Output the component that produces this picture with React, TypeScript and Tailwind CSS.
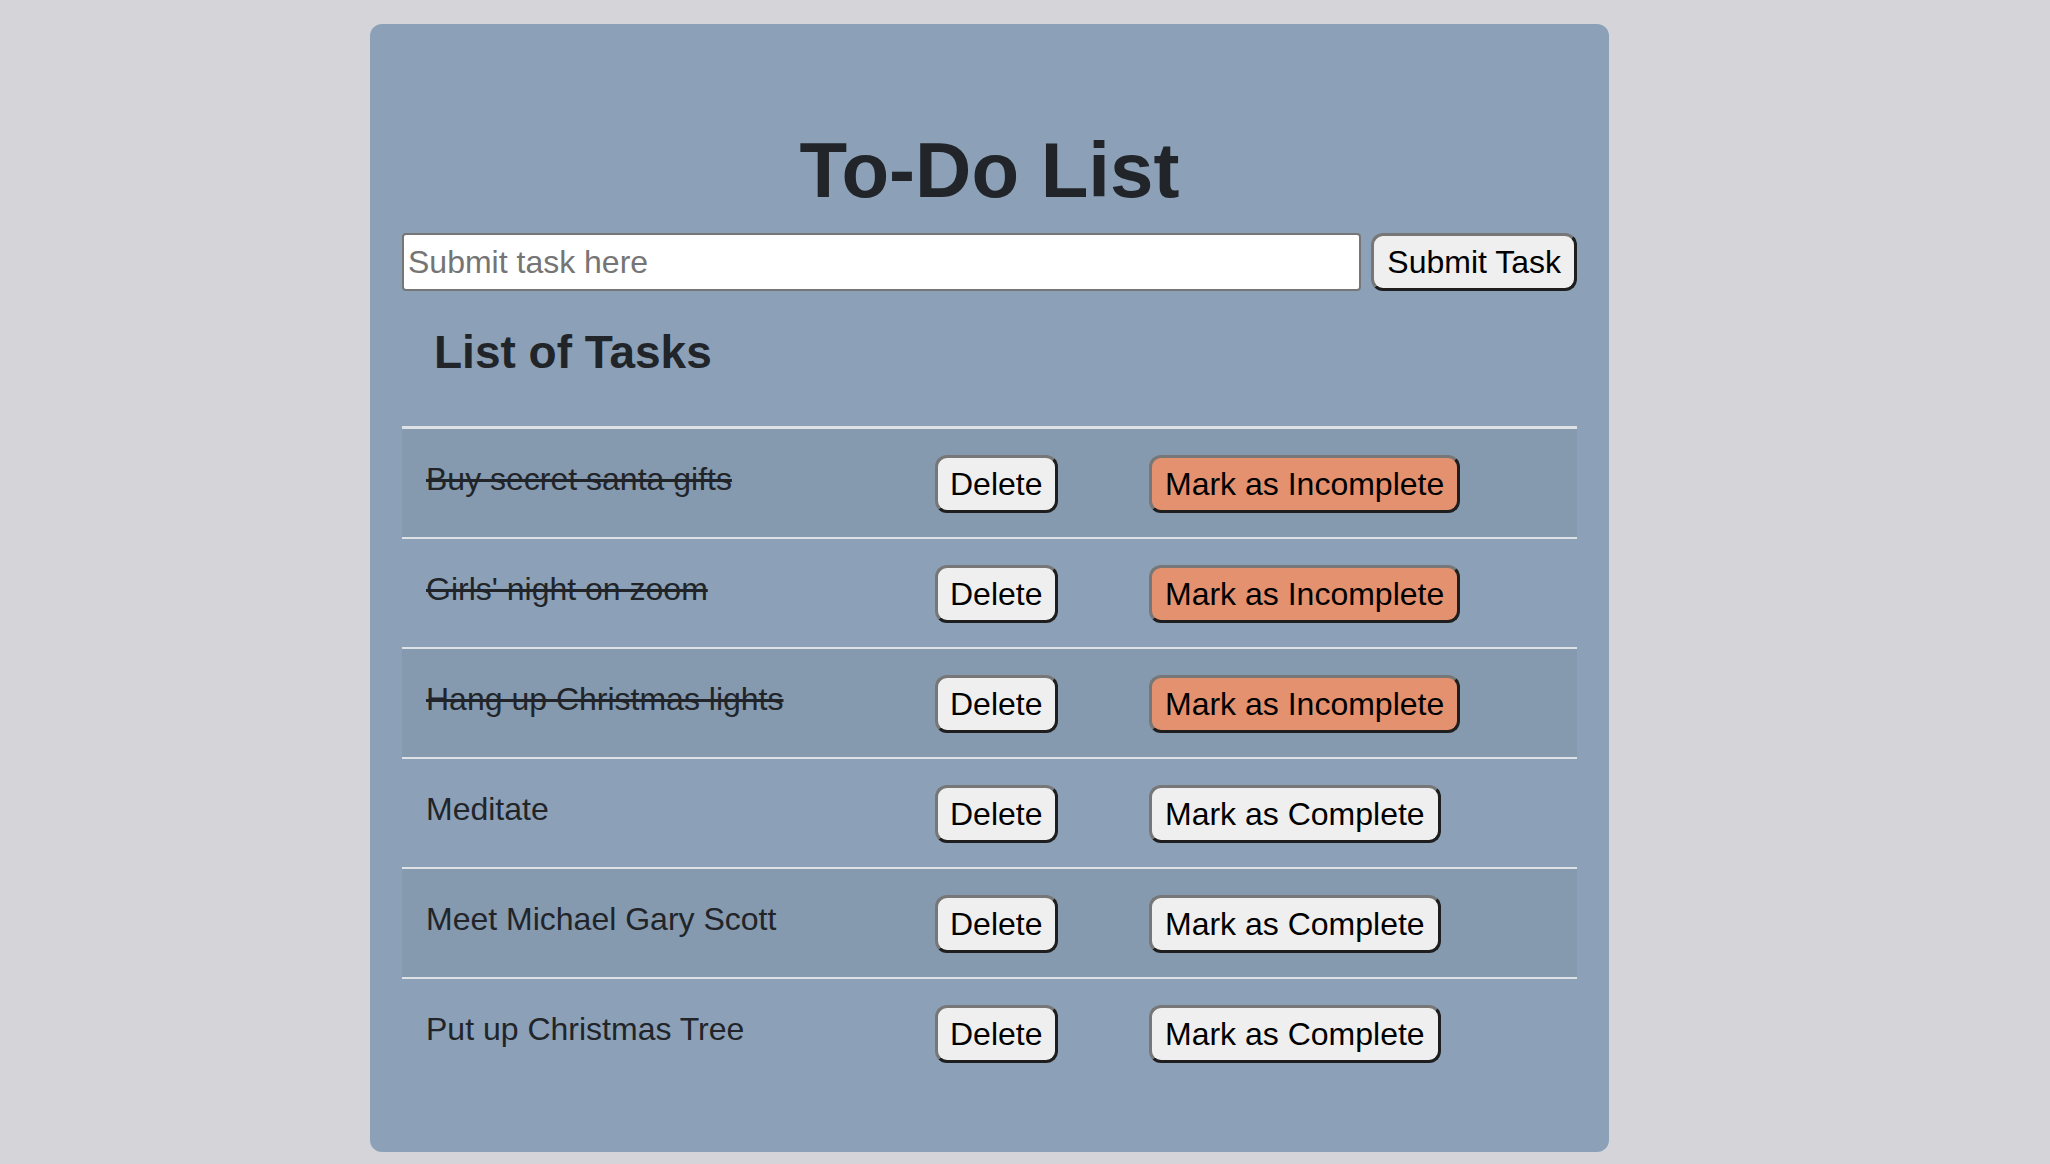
import { useState } from 'react';

type Task = { id: number; title: string; done: boolean };

const initialTasks: Task[] = [
  { id: 1, title: 'Buy secret santa gifts', done: true },
  { id: 2, title: "Girls' night on zoom", done: true },
  { id: 3, title: 'Hang up Christmas lights', done: true },
  { id: 4, title: 'Meditate', done: false },
  { id: 5, title: 'Meet Michael Gary Scott', done: false },
  { id: 6, title: 'Put up Christmas Tree', done: false },
];

const btnBase =
  'h-[58px] rounded-[12px] border-[3px] border-t-[#777777] border-l-[#777777] border-b-[#1e1e1e] border-r-[#1e1e1e] text-[32px] leading-[37px] text-black';

export default function App() {
  const [tasks, setTasks] = useState<Task[]>(initialTasks);
  const [text, setText] = useState('');

  const addTask = (e: React.FormEvent) => {
    e.preventDefault();
    if (!text.trim()) return;
    setTasks([...tasks, { id: Date.now(), title: text, done: false }]);
    setText('');
  };

  return (
    <div
      className="min-h-[1164px] bg-[#d4d4d9] pt-[24px] pl-[370px] pb-[12px]"
      style={{ fontFamily: '"Liberation Sans", Arial, sans-serif' }}
    >
      <div className="w-[1239px] bg-[#8ca1b8] rounded-[12px] px-[32px] pt-[99px] pb-[65px] text-[#212529]">
        {/* Title */}
        <h1 className="text-center text-[78px] leading-[94px] font-bold">To-Do List</h1>

        {/* Add task */}
        <form onSubmit={addTask} className="mt-[16px] flex gap-[10px] w-[1175px]">
          <input
            value={text}
            onChange={(e) => setText(e.target.value)}
            placeholder="Submit task here"
            className="flex-1 h-[58px] bg-white border-2 border-[#767676] rounded-[4px] px-[4px] text-[32px] text-black placeholder:text-[#757575] outline-none"
          />
          <button type="submit" className={`${btnBase} bg-[#efefef] px-[13px]`}>
            Submit Task
          </button>
        </form>

        {/* List */}
        <h4 className="mt-[34px] pl-[32px] text-[46px] leading-[55px] font-bold">List of Tasks</h4>

        <div className="mt-[46px] w-[1175px] border-t-[3px] border-[#dee2e6]">
          {tasks.map((task, i) => (
            <div
              key={task.id}
              className={`grid grid-cols-[509px_214px_1fr] h-[108px] pt-[26px] ${
                i > 0 ? 'border-t-2 border-[#dee2e6] h-[110px]' : ''
              } ${i % 2 === 0 ? 'bg-[#8599af]' : ''}`}
            >
              <div className={`pl-[24px] text-[32px] leading-[48px] ${task.done ? 'line-through' : ''}`}>
                {task.title}
              </div>
              <div className="pl-[24px]">
                <button
                  onClick={() => setTasks(tasks.filter((t) => t.id !== task.id))}
                  className={`${btnBase} bg-[#efefef] px-[12px]`}
                >
                  Delete
                </button>
              </div>
              <div className="pl-[24px]">
                <button
                  onClick={() =>
                    setTasks(tasks.map((t) => (t.id === task.id ? { ...t, done: !t.done } : t)))
                  }
                  className={`${btnBase} ${task.done ? 'bg-[#e4916f]' : 'bg-[#efefef]'} px-[13px]`}
                >
                  {task.done ? 'Mark as Incomplete' : 'Mark as Complete'}
                </button>
              </div>
            </div>
          ))}
        </div>
      </div>
    </div>
  );
}
